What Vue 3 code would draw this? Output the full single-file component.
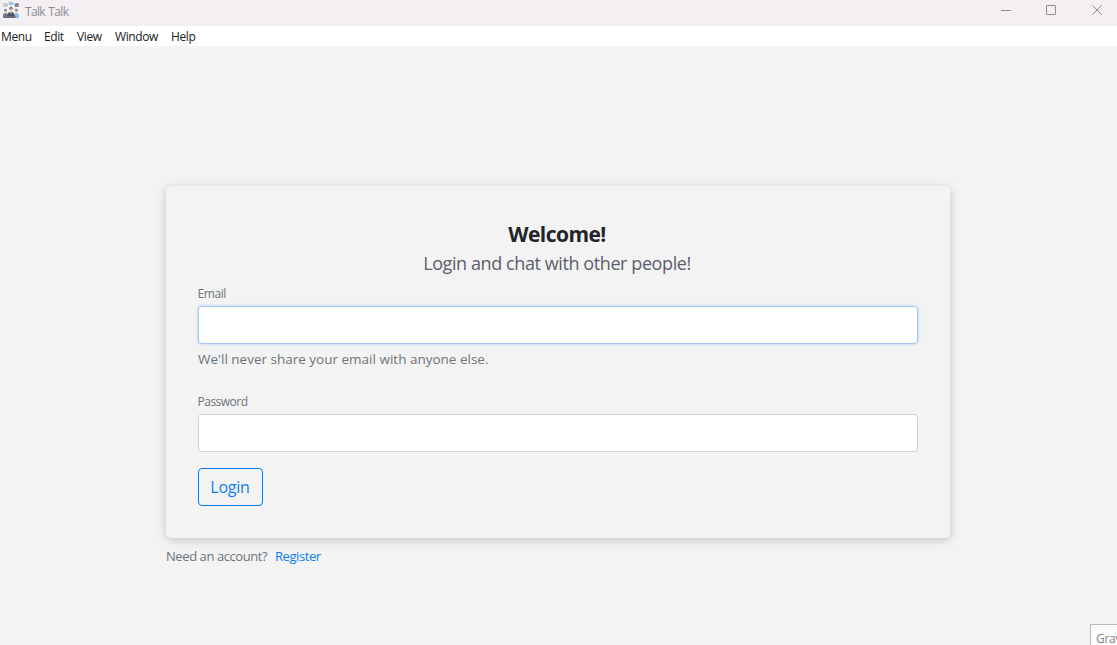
<script setup>
import { ref } from 'vue'

const menus = ['Menu', 'Edit', 'View', 'Window', 'Help']
const email = ref('')
const password = ref('')
</script>

<template>
  <div class="window">
    <header class="titlebar">
      <svg class="logo" width="17" height="17" viewBox="0 0 17 17">
        <rect x="0" y="0" width="16" height="16" fill="#f7f5f6" />
        <rect x="0" y="1" width="5" height="4" rx="1.5" fill="#cbcac7" />
        <path d="M5.5 0h5v3h-1.5l-1 1-1-1h-1.5z" fill="#a3c5ee" />
        <rect x="11.5" y="1" width="4.5" height="4" rx="1.5" fill="#858792" />
        <circle cx="2.5" cy="8.3" r="1.5" fill="#77737b" />
        <circle cx="2.5" cy="9.5" r="1.2" fill="#d9bba9" />
        <circle cx="13.5" cy="8.3" r="1.5" fill="#747985" />
        <circle cx="13.5" cy="9.5" r="1.2" fill="#d9bba9" />
        <circle cx="8" cy="6.6" r="1.8" fill="#746e76" />
        <circle cx="8" cy="7.9" r="1.3" fill="#d8b9aa" />
        <path d="M0 16v-3.5l1.5-1.3h3L5.5 16z" fill="#74798c" />
        <path d="M11 16l.5-4.8h3l1.5 1.3V16z" fill="#91bdec" />
        <path d="M4 14l1.5-3.5L8 9.7l2.5.8L12 14v1.5H4z" fill="#50515d" />
        <path d="M7.3 10h1.4L8 12.3z" fill="#fff" />
        <rect x="3" y="14" width="9.5" height="2" fill="#6a6874" />
      </svg>
      <span class="app-name">Talk Talk</span>
      <div class="controls">
        <svg width="11" height="11" viewBox="0 0 11 11"><path d="M0 5.5h10" /></svg>
        <svg width="11" height="11" viewBox="0 0 11 11"><rect x=".5" y=".5" width="9" height="9" rx=".6" /></svg>
        <svg width="11" height="11" viewBox="0 0 11 11"><path d="M.3.3l9.4 9.4M9.7.3L.3 9.7" /></svg>
      </div>
    </header>

    <nav class="menubar">
      <span v-for="m in menus" :key="m" :class="['menu', 'menu-' + m.toLowerCase()]">{{ m }}</span>
    </nav>

    <main class="page">
      <form class="card" @submit.prevent>
        <h1>Welcome!</h1>
        <p class="subtitle">Login and chat with other people!</p>
        <label for="email">Email</label>
        <input id="email" v-model="email" class="active" type="email" />
        <small class="hint">We'll never share your email with anyone else.</small>
        <label class="password-label" for="password">Password</label>
        <input id="password" v-model="password" type="password" />
        <button type="submit">Login</button>
      </form>
      <div class="account">
        <span class="need">Need an account?</span><a class="register">Register</a>
      </div>
    </main>

    <div class="tooltip">Grav</div>
  </div>
</template>

<style scoped>
.window {
  position: relative;
  width: 1117px;
  height: 645px;
  overflow: hidden;
  background: #f3f3f3;
  font-family: "Open Sans", "Noto Sans", sans-serif;
  color: #6c757d;
}
.titlebar {
  display: flex;
  align-items: flex-start;
  height: 26px;
  padding: 2px 14px 0 3px;
  box-sizing: border-box;
  background: #f3eff3;
}
.logo {
  flex: none;
}
.app-name {
  margin-left: 5px;
  font-size: 12px;
  line-height: 19px;
  letter-spacing: -0.65px;
  word-spacing: 0.8px;
  color: #8f8d90;
}
.controls {
  display: flex;
  gap: 34px;
  margin-left: auto;
  padding-top: 3px;
}
.controls svg {
  fill: none;
  stroke: #8c8a8d;
  stroke-width: 1;
}
.controls svg:last-child {
  margin-left: 1px;
}
.menubar {
  display: flex;
  height: 20px;
  padding-left: 1px;
  background: #fff;
  font-size: 12px;
  line-height: 21px;
  letter-spacing: -0.4px;
  color: #202020;
}
.menu {
  flex: none;
  white-space: nowrap;
}
.menu-menu { width: 43px; }
.menu-edit { width: 33px; }
.menu-view { width: 38px; }
.menu-window { width: 56px; }
.page {
  width: 784px;
  margin: 140px auto 0 166px;
}
.card {
  display: flex;
  flex-direction: column;
  height: 352px;
  box-sizing: border-box;
  padding: 32px;
  border-radius: 5px;
  box-shadow: 0 2px 10px rgba(0, 0, 0, 0.2);
}
h1 {
  margin: 0;
  height: 32px;
  padding-right: 2px;
  text-align: center;
  font-size: 21px;
  line-height: 33px;
  font-weight: 700;
  letter-spacing: -0.55px;
  color: #212529;
}
.subtitle {
  margin: 0;
  height: 28px;
  padding-right: 2px;
  text-align: center;
  font-size: 18px;
  line-height: 27px;
  letter-spacing: -0.41px;
  color: #5c5e6b;
}
label {
  height: 28px;
  font-size: 12px;
  line-height: 31px;
  letter-spacing: -0.4px;
  text-indent: -0.5px;
}
.password-label {
  letter-spacing: -0.5px;
}
input {
  flex: none;
  width: 720px;
  height: 38px;
  box-sizing: border-box;
  padding: 6px 12px;
  border: 1px solid #ced4da;
  border-radius: 4px;
  outline: none;
  background: #fff;
  font: inherit;
}
input.active {
  border-color: #a5c9ee;
  box-shadow: 0 0 2px 1px rgba(128, 189, 255, 0.35);
}
.hint {
  height: 42px;
  font-size: 13.5px;
  line-height: 30px;
}
button {
  width: 65px;
  height: 38px;
  margin-top: 16px;
  padding: 0 1px 0 0;
  border: 1px solid #007bff;
  border-radius: 4px;
  background: transparent;
  color: #0a80f5;
  font-family: inherit;
  font-size: 16px;
  line-height: 37px;
  letter-spacing: -0.25px;
}
.account {
  display: flex;
  height: 36px;
  font-size: 13px;
  line-height: 36px;
  letter-spacing: -0.42px;
}
.need {
  width: 109px;
  white-space: nowrap;
}
.register {
  color: #0a80f5;
}
.tooltip {
  position: absolute;
  left: 1090px;
  top: 624px;
  width: 60px;
  height: 30px;
  box-sizing: border-box;
  padding-left: 5px;
  border: 1px solid #b9b9b9;
  background: #fbfbfb;
  font-size: 12px;
  line-height: 27px;
  letter-spacing: -0.3px;
  color: #858585;
}
</style>
